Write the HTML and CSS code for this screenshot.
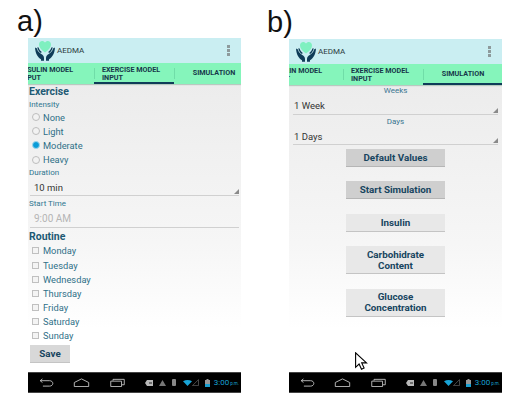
FILE: index.html
```html
<!DOCTYPE html>
<html lang="en">
<head>
  <meta charset="UTF-8" />
  <title>AEDMA screens</title>
  <link rel="stylesheet" href="styles.css">
</head>
<body>
  <svg class="sprites" width="0" height="0">
    <symbol id="logo" viewBox="0 0 22 20">
      <path fill="#7ff0c0" d="M11 11.500C7 8.500 5 6.300 5 3.500 5 1.400 6.500 0 8.200 0 9.300 0 10.400.6 11 1.600 11.600.6 12.700 0 13.800 0 15.500 0 17 1.400 17 3.500c0 2.800-2 5-6 8z"/>
      <g id="hand" fill="#0f3c58">
        <path d="M1 6.500l2 1c.4 2.400 1.800 4 4.300 5.500 1.700 1 2.700 2.400 2.700 4v2.800H7v-1.600C3.800 16.400 1.400 12.800 1 6.500z"/>
        <path d="M3.300 6.200l1.300.4c.5 1.900 1.500 3.200 3.200 4.400l-.9.900C4.900 10.700 3.700 8.800 3.300 6.200z"/>
      </g>
      <use href="#hand" transform="matrix(-1 0 0 1 22 0)"/>
    </symbol>
    <symbol id="nav-back" viewBox="0 0 16 10">
      <path fill="none" stroke="#c4c4c4" stroke-width="1" d="M1 3h10.500C13.500 3 15 4.300 15 6s-1.500 3-3.500 3H4M3.500 1L1 3l2.500 2"/>
    </symbol>
    <symbol id="nav-home" viewBox="0 0 18 10">
      <path fill="none" stroke="#c4c4c4" stroke-width="1" d="M1 5l8-4 8 4v4.500H1z"/>
    </symbol>
    <symbol id="nav-recent" viewBox="0 0 16 10">
      <path fill="none" stroke="#c4c4c4" stroke-width="1" d="M.5 3.500h12v6H.5zM3 3V1.500h12.500v6H13"/>
    </symbol>
    <symbol id="st-plus" viewBox="0 0 8 6">
      <path fill="#b8b8b8" d="M2 0h6v6H2L0 3z"/><path fill="#222" d="M4 2.500h3v1H4z"/>
    </symbol>
    <symbol id="st-warn" viewBox="0 0 7 6"><path fill="#777" d="M3.500 0L7 6H0z"/></symbol>
    <symbol id="st-vib" viewBox="0 0 4 7"><rect width="4" height="7" rx="1" fill="#888"/></symbol>
    <symbol id="st-wifi" viewBox="0 0 9 6"><path fill="#19a5d8" d="M0 1.200C3 -.4 6 -.4 9 1.200L4.500 6z"/></symbol>
    <symbol id="st-signal" viewBox="0 0 7 7"><path fill="none" stroke="#666" stroke-width=".7" d="M.5 6.600L6.500.6v6z"/></symbol>
    <symbol id="st-batt" viewBox="0 0 5 8"><rect y="1" width="5" height="7" fill="#999"/><rect x="1.500" width="2" height="1" fill="#999"/><rect y="5" width="5" height="3" fill="#1a9fd0"/></symbol>
  </svg>

  <div class="figure">
    <section class="panel panel-a">
      <div class="fig-label">a)</div>
      <div class="phone">
        <header class="action-bar">
          <svg class="logo"><use href="#logo"/></svg>
          <span class="app-name">AEDMA</span>
          <span class="overflow"><i></i><i></i><i></i></span>
        </header>
        <nav class="tabs tabs-a">
          <div class="tab">INSULIN MODEL<br>INPUT</div>
          <div class="tab active">EXERCISE MODEL<br>INPUT</div>
          <div class="tab single">SIMULATION</div>
        </nav>
        <main class="content form">
          <h2>Exercise</h2>
          <div class="field-label">Intensity</div>
          <div class="option"><span class="radio"></span>None</div>
          <div class="option"><span class="radio"></span>Light</div>
          <div class="option"><span class="radio checked"></span>Moderate</div>
          <div class="option"><span class="radio"></span>Heavy</div>
          <div class="field-label after-options">Duration</div>
          <div class="spinner">10 min</div>
          <div class="field-label start-time">Start Time</div>
          <div class="time-input">9:00 AM</div>
          <h2 class="routine">Routine</h2>
          <div class="option"><span class="check"></span>Monday</div>
          <div class="option"><span class="check"></span>Tuesday</div>
          <div class="option"><span class="check"></span>Wednesday</div>
          <div class="option"><span class="check"></span>Thursday</div>
          <div class="option"><span class="check"></span>Friday</div>
          <div class="option"><span class="check"></span>Saturday</div>
          <div class="option"><span class="check"></span>Sunday</div>
          <button class="btn save">Save</button>
        </main>
        <footer class="nav-bar">
          <svg class="ic-back"><use href="#nav-back"/></svg>
          <svg class="ic-home"><use href="#nav-home"/></svg>
          <svg class="ic-recent"><use href="#nav-recent"/></svg>
          <div class="status">
            <svg class="s-plus"><use href="#st-plus"/></svg>
            <svg class="s-warn"><use href="#st-warn"/></svg>
            <svg class="s-vib"><use href="#st-vib"/></svg>
            <svg class="s-wifi"><use href="#st-wifi"/></svg>
            <svg class="s-signal"><use href="#st-signal"/></svg>
            <svg class="s-batt"><use href="#st-batt"/></svg>
            <span class="clock">3:00<small>p.m.</small></span>
          </div>
        </footer>
      </div>
    </section>

    <section class="panel panel-b">
      <div class="fig-label">b)</div>
      <div class="phone">
        <header class="action-bar">
          <svg class="logo"><use href="#logo"/></svg>
          <span class="app-name">AEDMA</span>
          <span class="overflow"><i></i><i></i><i></i></span>
        </header>
        <nav class="tabs tabs-b">
          <div class="tab">INSULIN MODEL<br>INPUT</div>
          <div class="tab">EXERCISE MODEL<br>INPUT</div>
          <div class="tab single active">SIMULATION</div>
        </nav>
        <main class="content sim">
          <div class="sim-label">Weeks</div>
          <div class="spinner">1 Week</div>
          <div class="sim-label second">Days</div>
          <div class="spinner">1 Days</div>
          <div class="sim-buttons">
            <button class="btn dark">Default Values</button>
            <button class="btn dark">Start Simulation</button>
            <button class="btn">Insulin</button>
            <button class="btn tall">Carbohidrate<br>Content</button>
            <button class="btn tall">Glucose<br>Concentration</button>
          </div>
        </main>
        <footer class="nav-bar">
          <svg class="ic-back"><use href="#nav-back"/></svg>
          <svg class="ic-home"><use href="#nav-home"/></svg>
          <svg class="ic-recent"><use href="#nav-recent"/></svg>
          <div class="status">
            <svg class="s-plus"><use href="#st-plus"/></svg>
            <svg class="s-warn"><use href="#st-warn"/></svg>
            <svg class="s-vib"><use href="#st-vib"/></svg>
            <svg class="s-wifi"><use href="#st-wifi"/></svg>
            <svg class="s-signal"><use href="#st-signal"/></svg>
            <svg class="s-batt"><use href="#st-batt"/></svg>
            <span class="clock">3:00<small>p.m.</small></span>
          </div>
        </footer>
      </div>
      <!-- mouse pointer lying over the screen -->
      <svg class="cursor" viewBox="0 0 13 18">
        <path fill="#fff" stroke="#000" stroke-width="1.100" d="M.6.800v14.500l3.500-3.300 2.400 5.200 2.600-1.200-2.400-5.100h4.800z"/>
      </svg>
    </section>
  </div>
</body>
</html>
```

FILE: styles.css
```css
* {
  box-sizing: border-box;
}

body {
  margin: 0;
  background: #fff;
  font-family: Roboto, "Liberation Sans", sans-serif;
  color: #1f5f78;
}

.sprites {
  position: absolute;
}

.figure {
  display: flex;
  width: 526px;
  height: 412px;
  overflow: hidden;
}

.panel {
  position: relative;
  width: 213px;
}

.panel-a {
  margin-left: 28px;
}

.panel-b {
  margin-left: 48px;
  padding-top: 1px;
}

.fig-label {
  height: 38px;
  font-family: "Liberation Sans", Arial, sans-serif;
  font-size: 29px;
  line-height: 42px;
  color: #111;
}

.panel-a .fig-label {
  margin-left: -11px;
}

.panel-b .fig-label {
  margin-left: -22px;
}

.phone {
  display: flex;
  flex-direction: column;
  width: 213px;
  overflow: hidden;
}

.panel-a .phone {
  height: 355px;
}

.panel-b .phone {
  height: 354px;
}

/* action bar */
.action-bar {
  display: flex;
  align-items: center;
  flex: none;
  height: 25px;
  padding: 0 11px 0 6px;
  background: #caeef2;
}

.logo {
  width: 22px;
  height: 20px;
}

.app-name {
  margin-left: 1px;
  font-size: 8px;
  color: #2b3a40;
}

.overflow {
  display: flex;
  flex-direction: column;
  gap: 1.500px;
  margin-left: auto;
}

.overflow i {
  width: 3px;
  height: 2.500px;
  background: #8d9a9c;
}

/* tabs */
.tabs {
  position: relative;
  display: flex;
  flex: none;
  height: 21px;
  background: #85f5bb;
  box-shadow: 0 1px 1px #b9c9c0;
}

.tabs-a {
  margin-left: -14px;
}

.tabs-b {
  margin-left: -26px;
}

.tab {
  position: relative;
  flex: none;
  width: 80px;
  padding: 2.500px 0 0 8px;
  font-size: 7.200px;
  font-weight: 700;
  line-height: 8px;
  color: #17384a;
  white-space: nowrap;
}

.tab:first-child {
  padding-left: 6px;
}

.tab + .tab::before {
  content: "";
  position: absolute;
  left: 0;
  top: 5px;
  height: 11px;
  border-left: 1px solid #70dda8;
}

.tab.single {
  padding: 0;
  line-height: 20px;
  text-align: center;
}

.tab.active {
  border-bottom: 2px solid #0f3c58;
}

/* screen body */
.content {
  flex: 1;
  min-height: 0;
  background: linear-gradient(#ececec, #f6f6f6 55%, #fff 85%);
}

.form {
  padding: 2px 1px 0;
}

h2 {
  margin: 0;
  font-size: 10.500px;
  line-height: 12px;
  font-weight: 700;
  color: #1d5a74;
}

.field-label {
  margin-top: 2px;
  font-size: 8px;
  line-height: 10px;
  color: #2f7690;
}

.field-label.after-options {
  margin-top: 1px;
}

.field-label.start-time {
  margin-top: 3px;
}

.option {
  display: flex;
  align-items: center;
  height: 14.200px;
  padding-left: 3px;
  font-size: 9.300px;
  color: #2f7088;
}

.radio {
  width: 8px;
  height: 8px;
  margin-right: 3px;
  border: 1px solid #bdbdbd;
  border-radius: 50%;
  background: #f2f2f2;
}

.radio.checked {
  border-color: #9fd5ea;
  background: #0a9cd8;
}

.check {
  width: 7px;
  height: 7px;
  margin-right: 4px;
  border: 1px solid #c0c0c0;
  background: #f4f4f4;
}

.spinner {
  position: relative;
  height: 18px;
  margin: 0 1px;
  padding: 3px 0 0 4px;
  font-size: 9.500px;
  line-height: 14px;
  color: #333;
  border-bottom: 1px solid #d0d0d0;
}

.spinner::after {
  content: "";
  position: absolute;
  right: 0;
  bottom: 1px;
  border-left: 5px solid transparent;
  border-bottom: 5px solid #8a8a8a;
}

.time-input {
  height: 18px;
  margin: 1px 1px 0;
  padding: 2px 0 0 4px;
  font-size: 10px;
  line-height: 14px;
  color: #b5b5b5;
  border-bottom: 1px solid #d0d0d0;
}

.routine {
  margin: 3px 0 1px;
}

.btn {
  display: block;
  border: 0;
  border-bottom: 1px solid #c4c4c4;
  padding: 0;
  font-family: inherit;
  font-size: 9.800px;
  font-weight: 700;
  line-height: 11px;
  color: #17455f;
  background: #e8e8e8;
}

.btn.dark {
  background: #cfcfcf;
  border-bottom-color: #b5b5b5;
}

.save {
  width: 40px;
  height: 18px;
  margin: 2px 0 0 1px;
  background: #d8d8d8;
}

/* simulation tab */
.sim {
  padding: 1px 4px 0;
}

.sim-label {
  font-size: 8px;
  line-height: 10px;
  text-align: center;
  color: #3a7690;
}

.sim .spinner {
  height: 19px;
  margin: 0;
  padding-left: 1px;
}

.sim-label.second {
  margin-top: 2px;
}

.sim .spinner + .sim-label + .spinner {
  height: 18px;
}

.sim-buttons {
  display: flex;
  flex-direction: column;
  align-items: center;
  gap: 14.500px;
  margin-top: 3.500px;
}

.sim-buttons .btn {
  width: 99px;
  height: 18px;
}

.sim-buttons .tall {
  height: 28px;
}

/* soft keys */
.nav-bar {
  display: flex;
  align-items: center;
  flex: none;
  height: 21px;
  padding-left: 11px;
  background: #000;
  border-top: 1px solid #444;
  border-bottom: 1px solid #444;
}

.nav-bar svg {
  flex: none;
}

.ic-back {
  width: 15px;
  height: 9px;
}

.ic-home {
  width: 17px;
  height: 9px;
  margin-left: 19px;
}

.ic-recent {
  width: 15px;
  height: 9px;
  margin-left: 20px;
}

.status {
  display: flex;
  align-items: center;
  margin-left: auto;
  padding-right: 2px;
}

.s-plus {
  width: 8px;
  height: 6px;
}

.s-warn {
  width: 7px;
  height: 6px;
  margin-left: 6px;
}

.s-vib {
  width: 4px;
  height: 7px;
  margin-left: 6px;
}

.s-wifi {
  width: 9px;
  height: 6px;
  margin-left: 7px;
}

.s-signal {
  width: 7px;
  height: 7px;
}

.s-batt {
  width: 5px;
  height: 8px;
  margin-left: 6px;
}

.clock {
  margin-left: 4px;
  font-size: 8px;
  color: #16a0d2;
}

.clock small {
  margin-left: 1px;
  font-size: 4.500px;
}

.cursor {
  position: absolute;
  left: 66px;
  top: 352px;
  width: 13px;
  height: 18px;
}
```
